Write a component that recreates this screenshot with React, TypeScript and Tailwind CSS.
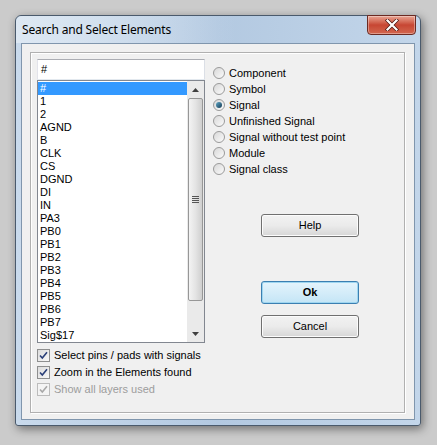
import React from "react";

const items = ["#", "1", "2", "AGND", "B", "CLK", "CS", "DGND", "DI", "IN", "PA3", "PB0", "PB1", "PB2", "PB3", "PB4", "PB5", "PB6", "PB7", "Sig$17"];
const radios = ["Component", "Symbol", "Signal", "Unfinished Signal", "Signal without test point", "Module", "Signal class"];

function Check({ label, disabled }: { label: string; disabled?: boolean }) {
  return (
    <div className="flex h-[17px] items-center">
      <div
        className={`flex h-[13px] w-[13px] items-center justify-center border ${disabled ? "border-[#bcbcbc] bg-[#f4f4f4]" : "border-[#8e8f8f] bg-gradient-to-br from-[#dcdcdc] to-[#f8f8f8]"}`}
      >
        <svg width="9" height="9" viewBox="0 0 9 9">
          <path d="M1 4.5 L3.3 7 L8 1.3" fill="none" stroke={disabled ? "#a8a8a8" : "#2a3f78"} strokeWidth="1.6" />
        </svg>
      </div>
      <span className={`ml-[4px] ${disabled ? "text-[#9d9d9d]" : "text-black"}`}>{label}</span>
    </div>
  );
}

function Radio({ label, checked }: { label: string; checked?: boolean }) {
  return (
    <div className="flex h-[16px] items-center">
      <div className="flex h-[12px] w-[12px] items-center justify-center rounded-full border border-[#9a9a9a] bg-gradient-to-br from-[#d8d8d8] to-[#fbfbfb]">
        {checked && <div className="h-[6px] w-[6px] rounded-full bg-gradient-to-br from-[#5fa8c8] to-[#173c55]" />}
      </div>
      <span className="ml-[4px]">{label}</span>
    </div>
  );
}

function Btn({ label, def, bold }: { label: string; def?: boolean; bold?: boolean }) {
  return (
    <div
      className={`flex h-[23px] w-[98px] items-center justify-center rounded-[3px] border ${def ? "border-[#3c7fb1] bg-gradient-to-b from-[#e5f4fc] to-[#c4e5f6] shadow-[inset_0_0_0_1px_#9fd6f0]" : "border-[#707070] bg-gradient-to-b from-[#f2f2f2] via-[#ebebeb] to-[#d6d6d6] shadow-[inset_0_0_0_1px_#fcfcfc]"} ${bold ? "font-bold" : ""}`}
    >
      {label}
    </div>
  );
}

export default function App() {
  return (
    <div
      className="relative h-[445px] w-[437px] bg-[#cbcbcb] pl-[15px] pt-[15px] text-[11px] text-black"
      style={{ fontFamily: '"Liberation Sans", Arial, sans-serif' }}
    >
      <div className="flex h-[411px] w-[406px] flex-col rounded-t-[6px] rounded-b-[3px] border border-[#4a5a6c] bg-gradient-to-r from-[#c9daec] via-[#b3c9e1] to-[#c3d6ea] shadow-[2px_3px_10px_rgba(0,0,0,0.45)]">
        <div className="relative flex h-[27px] items-center pl-[6px] pt-[1px]">
          <div className="absolute left-0 top-0 h-[27px] w-[220px] rounded-tl-[6px] bg-gradient-to-r from-[#dde8f3] to-transparent" />
          <span className="relative text-[12px] text-black" style={{ fontFamily: '"Noto Sans", "Liberation Sans", sans-serif', letterSpacing: "-0.2px" }}>
            Search and Select Elements
          </span>
          <div className="absolute right-[4px] top-[-1px] flex h-[20px] w-[49px] items-center justify-center rounded-b-[4px] border border-[#6b2a22] bg-gradient-to-b from-[#e8a493] via-[#c74633] to-[#d2674f] shadow-[inset_0_0_0_1px_rgba(255,255,255,0.35)]">
            <svg width="14" height="12" viewBox="0 0 14 12">
              <path d="M2.5 1.5 L11.5 10.5 M11.5 1.5 L2.5 10.5" stroke="#4a1510" strokeWidth="3.6" strokeLinecap="square" />
              <path d="M2.5 1.5 L11.5 10.5 M11.5 1.5 L2.5 10.5" stroke="#ffffff" strokeWidth="2.2" strokeLinecap="square" />
            </svg>
          </div>
        </div>
        <div className="mx-[5px] mb-[5px] flex-1 border border-[#8096ad] bg-[#f0f0f0] pl-[8px] pt-[8px]">
          <div className="h-[361px] w-[375px] border border-[#b0b0b0] pl-[6px] pt-[6px] shadow-[1px_1px_0_#ffffff,inset_1px_1px_0_#ffffff]">
            <div className="flex">
              <div className="flex w-[168px] flex-col">
                <div className="flex h-[21px] items-center border border-[#abadb3] border-b-[#e3e9ef] border-l-[#e2e3ea] border-r-[#dbdfe6] bg-white pl-[3px]">
                  #
                </div>
                <div className="flex h-[263px] border border-[#828790] bg-white">
                  <div className="flex flex-1 flex-col pt-[1px]">
                    {items.map((it, i) => (
                      <div
                        key={it}
                        className={`flex h-[13px] items-center pl-[2px] leading-[13px] ${i === 0 ? "bg-[#3399ff] text-white" : ""}`}
                      >
                        {it}
                      </div>
                    ))}
                  </div>
                  <div className="flex w-[17px] flex-col items-center bg-[#eaeaea]">
                    <div className="flex h-[17px] w-full items-center justify-center">
                      <svg width="7" height="4" viewBox="0 0 7 4">
                        <path d="M0 4 L3.5 0 L7 4 Z" fill="#404040" />
                      </svg>
                    </div>
                    <div className="flex h-[203px] w-[15px] items-center justify-center rounded-[2px] border border-[#979797] bg-gradient-to-r from-[#f3f3f3] via-[#e4e4e4] to-[#cfcfcf]">
                      <div className="flex flex-col gap-[1px]">
                        <div className="h-[1px] w-[7px] bg-[#555]" />
                        <div className="h-[1px] w-[7px] bg-[#555]" />
                        <div className="h-[1px] w-[7px] bg-[#555]" />
                        <div className="h-[1px] w-[7px] bg-[#555]" />
                      </div>
                    </div>
                    <div className="flex-1" />
                    <div className="flex h-[17px] w-full items-center justify-center">
                      <svg width="7" height="4" viewBox="0 0 7 4">
                        <path d="M0 0 L3.5 4 L7 0 Z" fill="#404040" />
                      </svg>
                    </div>
                  </div>
                </div>
                <div className="mt-[4px] flex flex-col">
                  <Check label="Select pins / pads with signals" />
                  <Check label="Zoom in the Elements found" />
                  <Check label="Show all layers used" disabled />
                </div>
              </div>
              <div className="ml-[8px] flex flex-col pt-[6px]">
                {radios.map((r) => (
                  <Radio key={r} label={r} checked={r === "Signal"} />
                ))}
                <div className="ml-[48px] mt-[37px] flex flex-col">
                  <Btn label="Help" />
                  <div className="mt-[44px]">
                    <Btn label="Ok" def bold />
                  </div>
                  <div className="mt-[11px]">
                    <Btn label="Cancel" />
                  </div>
                </div>
              </div>
            </div>
          </div>
        </div>
      </div>
    </div>
  );
}
